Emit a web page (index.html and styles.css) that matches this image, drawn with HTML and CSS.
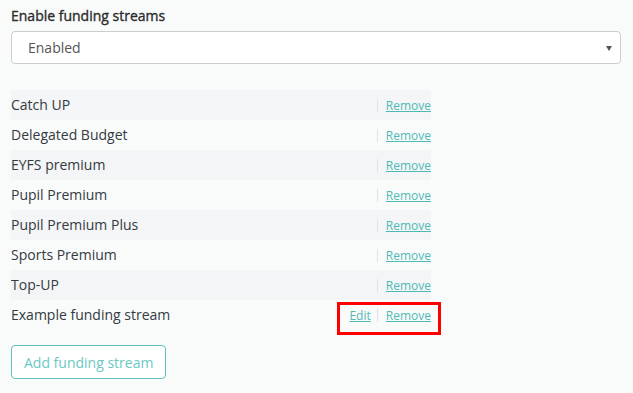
FILE: index.html
```html
<!DOCTYPE html>
<html>
<head>
<meta charset="utf-8">
<link rel="stylesheet" href="styles.css">
</head>
<body>
<div class="page">
  <label class="field-label">Enable funding streams</label>
  <div class="select">
    <span class="select-value">Enabled</span>
    <span class="caret"></span>
  </div>
  <table class="streams">
    <tr><td class="name">Catch UP</td><td class="actions"><span class="sep"></span><a class="link" href="#">Remove</a></td></tr>
    <tr><td class="name">Delegated Budget</td><td class="actions"><span class="sep"></span><a class="link" href="#">Remove</a></td></tr>
    <tr><td class="name">EYFS premium</td><td class="actions"><span class="sep"></span><a class="link" href="#">Remove</a></td></tr>
    <tr><td class="name">Pupil Premium</td><td class="actions"><span class="sep"></span><a class="link" href="#">Remove</a></td></tr>
    <tr><td class="name">Pupil Premium Plus</td><td class="actions"><span class="sep"></span><a class="link" href="#">Remove</a></td></tr>
    <tr><td class="name">Sports Premium</td><td class="actions"><span class="sep"></span><a class="link" href="#">Remove</a></td></tr>
    <tr><td class="name">Top-UP</td><td class="actions"><span class="sep"></span><a class="link" href="#">Remove</a></td></tr>
    <tr><td class="name">Example funding stream</td><td class="actions"><span class="highlight"><a class="link" href="#">Edit</a><span class="sep"></span><a class="link" href="#">Remove</a></span></td></tr>
  </table>
  <button class="add-btn">Add funding stream</button>
</div>
</body>
</html>
```
FILE: styles.css
```css
html, body {
  margin: 0;
  padding: 0;
  background: #f9fbfb;
}
body {
  font-family: "Open Sans", "Liberation Sans", sans-serif;
  color: #333a40;
}
.page {
  padding: 6px 12px 0 11px;
}
.field-label {
  display: block;
  font-size: 14px;
  font-weight: 400;
  -webkit-text-stroke: 0.35px #2b2b2b;
  line-height: 20px;
  color: #2b2b2b;
  margin-bottom: 5px;
}
.select {
  display: flex;
  align-items: center;
  justify-content: space-between;
  height: 31px;
  border: 1px solid #cccccc;
  border-radius: 4px;
  background: #ffffff;
  padding: 0 8px 0 16px;
}
.select-value {
  font-size: 14px;
  color: #555;
}
.caret {
  width: 0;
  height: 0;
  border-left: 3px solid transparent;
  border-right: 3px solid transparent;
  border-top: 5px solid #555;
  margin-top: 2px;
}
.streams {
  margin-top: 26px;
  width: 420px;
  border-collapse: collapse;
}
.streams tr {
  height: 30px;
}
.streams tr:nth-child(odd) {
  background: #f3f5f6;
}
.name {
  padding: 0;
  font-size: 14px;
  color: #333a40;
  line-height: 20px;
}
.actions {
  padding: 0;
  text-align: right;
  white-space: nowrap;
  font-size: 12px;
}
.sep {
  display: inline-block;
  width: 1px;
  height: 13px;
  background: #e0e3e6;
  margin: 0 8px 0 8px;
  vertical-align: -2px;
}
.highlight .sep {
  margin-left: 6px;
}
.link {
  color: #4fbab5;
  text-decoration: underline;
}
.highlight {
  display: inline-block;
  position: relative;
  line-height: 16px;
}
.highlight::after {
  content: "";
  position: absolute;
  top: -6px;
  bottom: -11px;
  left: -12px;
  right: -10px;
  border: 3px solid #ff0000;
  pointer-events: none;
}
.add-btn {
  margin-top: 15px;
  height: 34px;
  padding: 0 12px;
  border: 1px solid #5cc1bb;
  border-radius: 4px;
  background: #ffffff;
  color: #6cc8c3;
  font-family: "Open Sans", "Liberation Sans", sans-serif;
  font-size: 14px;
}
```
